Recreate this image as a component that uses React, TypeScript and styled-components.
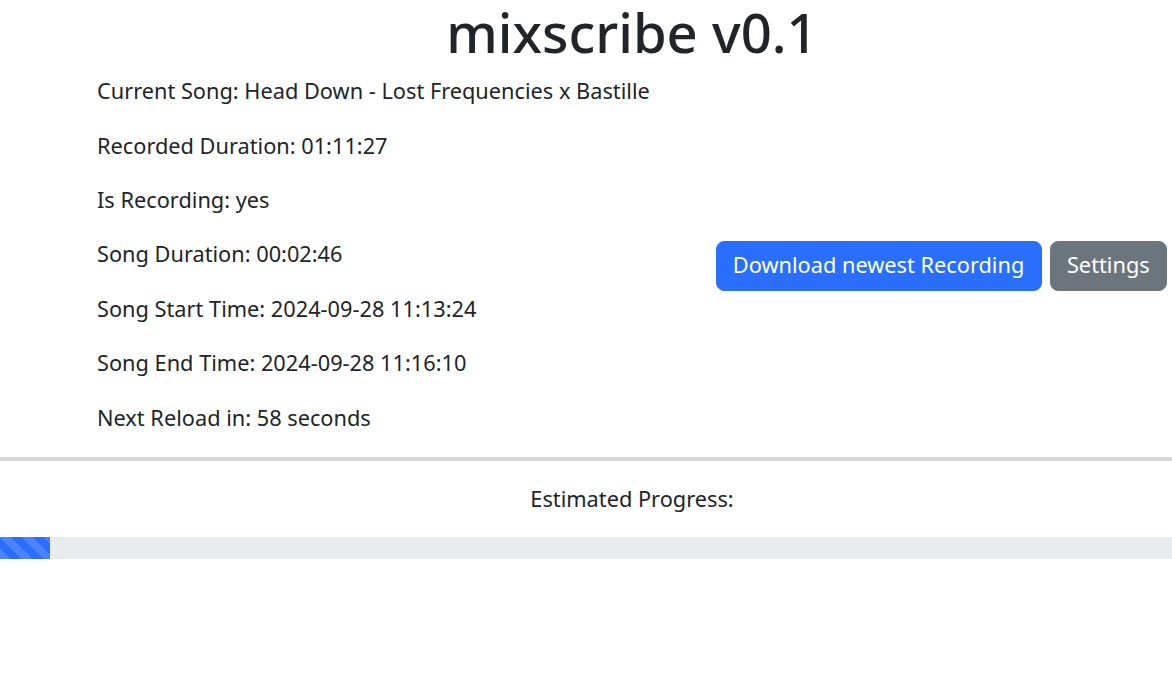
import React from "react";
import styled, { createGlobalStyle } from "styled-components";

const S = 1.36;
const px = (n: number) => `${(n * S).toFixed(2)}px`;

const Global = createGlobalStyle`
  html, body { margin: 0; padding: 0; background: #fff; overflow: hidden; }
  body {
    font-family: "Noto Sans", "Liberation Sans", sans-serif;
    font-size: ${px(16)};
    line-height: 1.5;
    color: #212529;
  }
  * { box-sizing: border-box; }
`;

const Page = styled.div`
  width: 100%;
`;

const Title = styled.h1`
  margin: 0 0 10px;
  padding-left: 92px;
  font-size: ${px(40)};
  font-weight: 500;
  line-height: 1.2;
  text-align: center;
`;

const Row = styled.div`
  display: flex;
  align-items: center;
`;

const InfoCol = styled.div`
  flex: 1 1 auto;
  padding-left: 97px;
`;

const ButtonCol = styled.div`
  flex: 0 0 auto;
  display: flex;
  gap: 8px;
  padding-right: 5px;
`;

const Info = styled.p`
  margin: 0 0 ${px(16)};
`;

const Button = styled.button<{ $variant: "primary" | "secondary" }>`
  font-family: inherit;
  font-size: ${px(16)};
  line-height: 1.5;
  padding: 0 ${px(12)};
  border: 1px solid ${(p) => (p.$variant === "primary" ? "#2a6ffb" : "#6c757d")};
  background: ${(p) => (p.$variant === "primary" ? "#2a6ffb" : "#6c757d")};
  color: #fff;
  border-radius: ${px(6)};
  height: 50px;
  display: inline-flex;
  align-items: center;
  white-space: nowrap;
`;

const Divider = styled.hr`
  margin: 1px 0 ${px(16)};
  border: 0;
  border-top: 4px solid #d6d7d8;
`;

const ProgressLabel = styled.p`
  text-align: center;
  padding-left: 92px;
  margin: 0 0 ${px(16)};
`;

const Progress = styled.div`
  height: 22px;
  background: #e9ecef;
  overflow: hidden;
  display: flex;
`;

const Bar = styled.div`
  height: 100%;
  background-color: #2a6ffb;
  background-image: linear-gradient(
    45deg,
    rgba(255, 255, 255, 0.15) 25%,
    transparent 25%,
    transparent 50%,
    rgba(255, 255, 255, 0.15) 50%,
    rgba(255, 255, 255, 0.15) 75%,
    transparent 75%,
    transparent
  );
  background-size: 22px 22px;
`;

const info = [
  "Current Song: Head Down - Lost Frequencies x Bastille",
  "Recorded Duration: 01:11:27",
  "Is Recording: yes",
  "Song Duration: 00:02:46",
  "Song Start Time: 2024-09-28 11:13:24",
  "Song End Time: 2024-09-28 11:16:10",
  "Next Reload in: 58 seconds",
];

export default function App() {
  const progress = 50;
  return (
    <Page>
      <Global />
      <Title>mixscribe v0.1</Title>
      <Row>
        <InfoCol>
          {info.map((t) => (
            <Info key={t}>{t}</Info>
          ))}
        </InfoCol>
        <ButtonCol>
          <Button $variant="primary">Download newest Recording</Button>
          <Button $variant="secondary">Settings</Button>
        </ButtonCol>
      </Row>
      <Divider />
      <ProgressLabel>Estimated Progress:</ProgressLabel>
      <Progress>
        <Bar style={{ width: `${progress}px` }} />
      </Progress>
    </Page>
  );
}
